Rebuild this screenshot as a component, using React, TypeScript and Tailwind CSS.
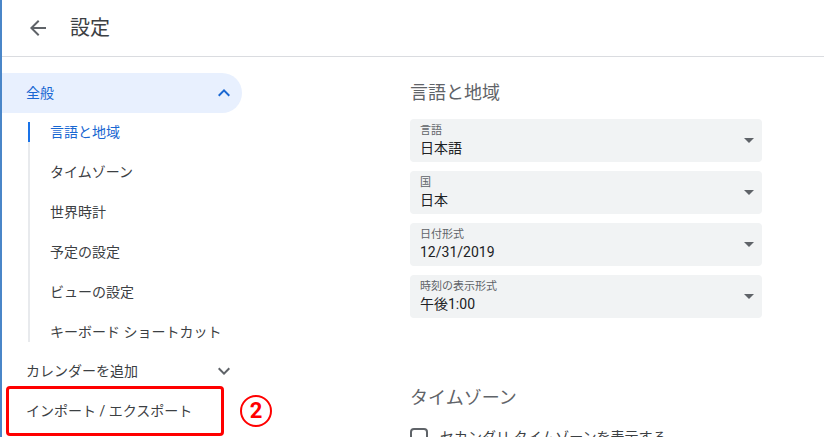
import React from 'react';

const font = { fontFamily: 'Roboto, "Noto Sans CJK JP", sans-serif' };

const subItems = ['言語と地域', 'タイムゾーン', '世界時計', '予定の設定', 'ビューの設定', 'キーボード ショートカット'];

const selects = [
  { label: '言語', value: '日本語' },
  { label: '国', value: '日本' },
  { label: '日付形式', value: '12/31/2019' },
  { label: '時刻の表示形式', value: '午後1:00' },
];

const Chevron: React.FC<{ up?: boolean; color: string }> = ({ up, color }) => (
  <svg width="24" height="24" viewBox="0 0 24 24" fill={color}>
    {up ? (
      <path d="M12 8l-6 6 1.41 1.41L12 10.83l4.59 4.58L18 14z" />
    ) : (
      <path d="M16.59 8.59L12 13.17 7.41 8.59 6 10l6 6 6-6z" />
    )}
  </svg>
);

const App: React.FC = () => {
  return (
    <div className="w-[824px] h-[442px] bg-white" style={font}>
      <div className="h-[437px] overflow-hidden border-l-2 border-[#4a86c8] flex flex-col">
        {/* Header */}
        <header className="h-[57px] shrink-0 border-b border-[#dadce0] flex items-center pl-6">
          <svg width="24" height="24" viewBox="0 0 24 24" fill="#5f6368">
            <path d="M20 11H7.83l5.59-5.59L12 4l-8 8 8 8 1.41-1.41L7.83 13H20v-2z" />
          </svg>
          <h1 className="ml-5 text-[20px] text-[#3c4043]">設定</h1>
        </header>

        <div className="flex flex-1 min-h-0">
          {/* Sidebar */}
          <nav className="w-[256px] shrink-0 pt-4">
            <div className="w-[240px] h-10 rounded-r-full bg-[#e8f0fe] flex items-center justify-between pl-6 pr-[6px]">
              <span className="text-sm text-[#1967d2]">全般</span>
              <Chevron up color="#1967d2" />
            </div>

            <div className="ml-[26px] my-[9px] border-l-2 border-[#e8eaed] flex flex-col gap-5">
              {subItems.map((item, i) => (
                <div
                  key={item}
                  className={
                    i === 0
                      ? '-ml-0.5 border-l-2 border-[#1a73e8] pl-5 h-5 flex items-center text-sm text-[#1967d2]'
                      : 'pl-5 h-5 flex items-center text-sm text-[#3c4043]'
                  }
                >
                  {item}
                </div>
              ))}
            </div>

            <div className="w-[240px] h-10 flex items-center justify-between pl-6 pr-[6px]">
              <span className="text-sm text-[#3c4043]">カレンダーを追加</span>
              <Chevron color="#5f6368" />
            </div>

            <div className="flex items-center -mt-[5px]">
              <div className="ml-1 shrink-0 w-[218px] h-[50px] border-[3px] border-[#ff0000] rounded-sm flex items-center pl-[17px]">
                <span className="text-sm text-[#3c4043]">インポート / エクスポート</span>
              </div>
              {/* annotation marker */}
              <div className="ml-4 shrink-0 w-8 h-8 rounded-full border-2 border-[#ff0000] flex items-center justify-center text-[#ff0000] text-[22px] font-bold leading-none">
                2
              </div>
            </div>
          </nav>

          {/* Main */}
          <main className="flex-1 pl-[152px]">
            <h2 className="mt-6 text-[18px] leading-6 text-[#5f6368]">言語と地域</h2>
            <div className="mt-[14px] flex flex-col gap-[9px]">
              {selects.map((s) => (
                <div
                  key={s.label}
                  className="w-[352px] h-[43px] bg-[#f1f3f4] rounded flex items-center justify-between pl-[10px] pr-2"
                >
                  <div className="flex flex-col">
                    <span className="text-[11px] leading-[14px] text-[#5f6368]">{s.label}</span>
                    <span className="text-sm leading-5 text-[#202124]">{s.value}</span>
                  </div>
                  <svg width="10" height="5" viewBox="0 0 10 5" fill="#5f6368">
                    <path d="M0 0l5 5 5-5z" />
                  </svg>
                </div>
              ))}
            </div>

            <h2 className="mt-[68px] text-[18px] leading-6 text-[#5f6368]">タイムゾーン</h2>
            <div className="mt-[18px] flex items-start gap-3">
              <div className="w-[18px] h-[18px] border-2 border-[#5f6368] rounded-sm shrink-0" />
              <span className="text-sm leading-[18px] text-[#3c4043]">セカンダリ タイムゾーンを表示する</span>
            </div>
          </main>
        </div>
      </div>
    </div>
  );
};

export default App;
